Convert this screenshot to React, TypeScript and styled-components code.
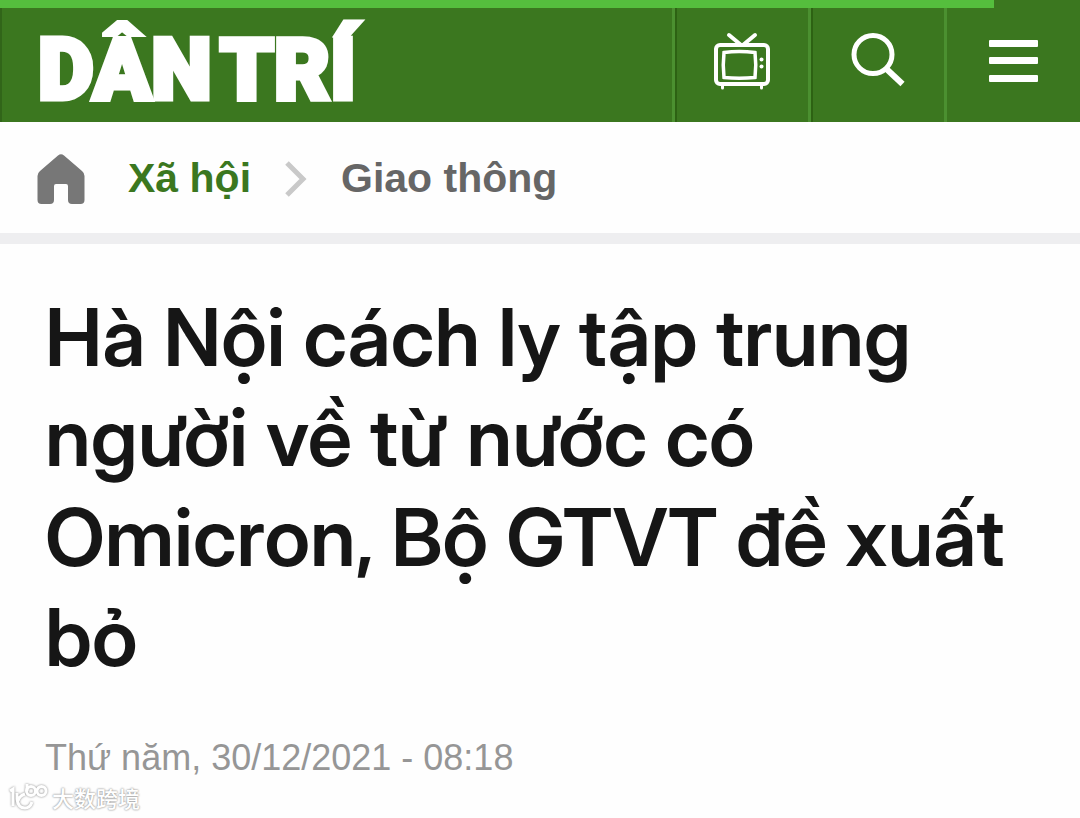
import React from 'react';
import styled, { createGlobalStyle } from 'styled-components';

const GlobalStyle = createGlobalStyle`
  * { box-sizing: border-box; }
  body {
    margin: 0;
    background: #fefefe;
    font-family: "Liberation Sans", Arial, sans-serif;
  }
`;

const Header = styled.header`
  background: #3b771f;
`;

const Progress = styled.div`
  height: 8px;
  width: 92%;
  background: #55be3d;
`;

const HeaderRow = styled.div`
  display: flex;
  height: 114px;
  border-left: 2px solid #316519;
`;

const Brand = styled.a`
  flex: 1;
  display: flex;
  align-items: center;
  gap: 8px;
  padding: 10px 36px 0;
  color: #fff;
  font-family: Roboto, sans-serif;
  font-size: 86px;
  font-weight: 900;
  line-height: 1;
  white-space: nowrap;
  text-decoration: none;
  -webkit-text-stroke: 5px #fff;
`;

const HeaderButton = styled.button<{ $last?: boolean }>`
  width: 136px;
  display: flex;
  justify-content: center;
  padding: 22px 0 0;
  border: 0;
  border-left: 3px solid #4b9030;
  background: transparent;
  box-shadow: ${(p) => (p.$last ? 'none' : 'inset 2px 0 #2d6213')};
  color: #fff;
  cursor: pointer;
`;

const Breadcrumb = styled.nav`
  display: flex;
  align-items: center;
  height: 122px;
  padding: 2px 37px 0;
  border-bottom: 11px solid #eeeef0;
  font-size: 41px;
  font-weight: 700;
`;

const HomeLink = styled.a`
  display: flex;
  margin-right: 43px;
`;

const Crumb = styled.a<{ $current?: boolean }>`
  color: ${(p) => (p.$current ? '#666' : '#3b771f')};
  text-decoration: none;
`;

const Chevron = styled.svg`
  margin: 0 34px;
`;

const Article = styled.main`
  padding: 43px 45px 0;
`;

const Title = styled.h1`
  margin: 0;
  color: #161616;
  font-family: "Inter Display", Inter, sans-serif;
  font-size: 80px;
  font-weight: 600;
  line-height: 100px;
`;

const Published = styled.time`
  display: block;
  margin-top: 49px;
  color: #969696;
  font-size: 36px;
  line-height: 44px;
`;

const Watermark = styled.footer`
  display: flex;
  align-items: center;
  gap: 4px;
  padding: 0 8px;
  color: #fff;
  font-family: "Noto Sans CJK SC", sans-serif;
  font-size: 22px;
  font-weight: 500;
  line-height: 34px;
  text-shadow: 0 0 2px #999, 0 0 2px #aaa;
`;

const WatermarkLogo = styled.svg`
  filter: drop-shadow(0 0 1px #888);
`;

export default function App() {
  return (
    <>
      <GlobalStyle />
      <Header>
        <Progress />
        <HeaderRow>
          <Brand href="#">
            <span>DÂN</span>
            <span>TRÍ</span>
          </Brand>
          <HeaderButton aria-label="TV">
            <svg width="58" height="60" viewBox="0 0 58 60" fill="none" stroke="#fff" strokeWidth="4" strokeLinecap="round">
              <rect x="3" y="15" width="52" height="39" rx="4" />
              <path d="M16 5l12 10M42 5L30 15" />
              <path d="M11 22.500q15-2 31 0q1.500 12 0 25q-16 1.500-31 0q-1.500-12 0-25z" strokeWidth="3.500" />
              <path d="M9.500 55v3M48.500 55v3" strokeWidth="3" />
              <circle cx="48.500" cy="29.500" r="2" fill="#fff" stroke="none" />
              <circle cx="48.500" cy="36.500" r="2" fill="#fff" stroke="none" />
            </svg>
          </HeaderButton>
          <HeaderButton aria-label="Tìm kiếm">
            <svg width="54" height="60" viewBox="0 0 54 60" fill="none" stroke="#fff">
              <circle cx="22" cy="24.500" r="19" strokeWidth="5" />
              <path d="M35.500 39L51.500 54" strokeWidth="6" />
            </svg>
          </HeaderButton>
          <HeaderButton $last aria-label="Menu">
            <svg width="50" height="60" viewBox="0 0 50 60" fill="#fff">
              <rect y="10" width="49" height="7" rx="1" />
              <rect y="27" width="49" height="7" rx="1" />
              <rect y="45" width="49" height="7" rx="1" />
            </svg>
          </HeaderButton>
        </HeaderRow>
      </Header>
      <Breadcrumb aria-label="Breadcrumb">
        <HomeLink href="#" aria-label="Trang chủ">
          <svg width="48" height="50" viewBox="0 0 48 50" fill="#777">
            <path d="M21 1.500Q24-1 27 1.500L45 17Q47.500 19 47.500 22V46Q47.500 50 43.500 50H35Q31 50 31 46V32Q31 30 29 30H19Q17 30 17 32V46Q17 50 13 50H4.500Q.5 50 .5 46V22Q.5 19 3 17Z" />
          </svg>
        </HomeLink>
        <Crumb href="#">Xã hội</Crumb>
        <Chevron width="22" height="36" viewBox="0 0 22 36" fill="none" stroke="#c9c9c9" strokeWidth="5">
          <path d="M2 2L18 18L2 34" />
        </Chevron>
        <Crumb href="#" $current>Giao thông</Crumb>
      </Breadcrumb>
      <Article>
        <Title>Hà Nội cách ly tập trung người về từ nước có Omicron, Bộ GTVT đề xuất bỏ</Title>
        <Published dateTime="2021-12-30T08:18">Thứ năm, 30/12/2021 - 08:18</Published>
      </Article>
      <Watermark>
        <WatermarkLogo width="40" height="30" viewBox="0 0 40 30" fill="none" stroke="#fff" strokeWidth="3">
          <path d="M2 9L5 7V24M9 11V17Q10 26 17 26Q22 26 24 20M17 12Q11 14 10 19M19 2V9" />
          <circle cx="23" cy="9" r="4.500" />
          <circle cx="33.500" cy="9" r="4.500" />
        </WatermarkLogo>
        大数跨境
      </Watermark>
    </>
  );
}
